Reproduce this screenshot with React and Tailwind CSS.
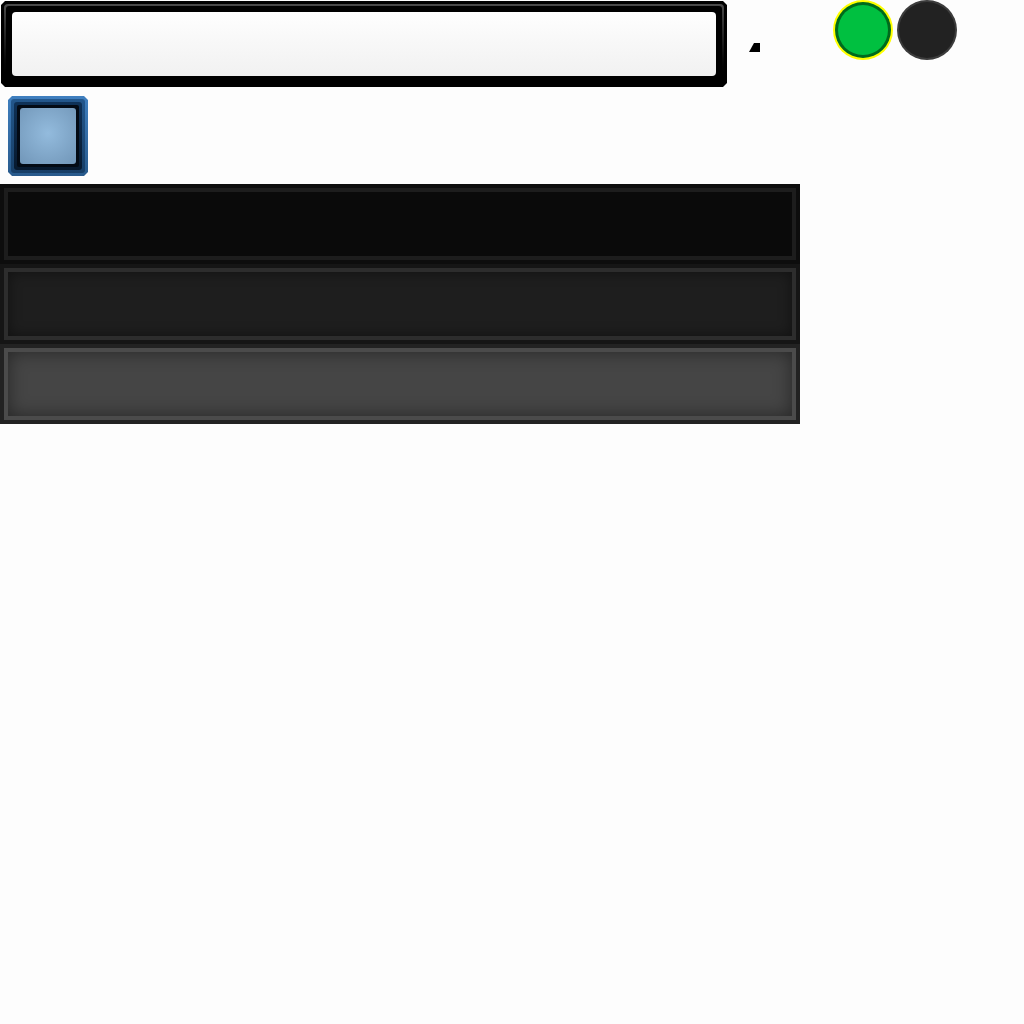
export default function App() {
  return (
    <div className="w-[1024px] h-[1024px] bg-[#fdfdfd] flex flex-col" style={{ fontFamily: '"Liberation Sans", sans-serif' }}>
      {/* top row */}
      <div className="flex items-start h-[88px]">
        <div className="mt-[1px] ml-[1px] w-[726px] h-[86px] bg-black p-[3px] [clip-path:polygon(4px_0,722px_0,726px_4px,726px_82px,722px_86px,4px_86px,0_82px,0_4px)]">
          <div className="w-full h-full p-[2px] bg-gradient-to-b from-[#4a4a4a] via-[#1a1a1a] to-black rounded-[4px]">
            <div className="w-full h-full bg-black p-[6px] rounded-[3px]">
              <div className="w-full h-full rounded-[4px] bg-gradient-to-b from-[#fefefe] to-[#f1f1f1]" />
            </div>
          </div>
        </div>
        <svg className="ml-[22px] mt-[43px]" width="11" height="9" viewBox="0 0 11 9">
          <polygon points="5,0 11,0 11,9 0,9" fill="#000" />
        </svg>
        <div className="ml-[73px] w-[60px] h-[60px] rounded-full bg-[#ffff00] p-[2px]">
          <div className="w-full h-full rounded-full bg-[#006a1c] p-[3px]">
            <div className="w-full h-full rounded-full bg-[#00c040]" />
          </div>
        </div>
        <div className="ml-[4px] w-[60px] h-[60px] rounded-full bg-[#3c3c3c] p-[2px]">
          <div className="w-full h-full rounded-full bg-[#222222]" />
        </div>
      </div>

      {/* blue button */}
      <div className="mt-[8px] ml-[8px] w-[80px] h-[80px] p-[3px] bg-gradient-to-b from-[#3f7fbf] to-[#285a8c] [clip-path:polygon(4px_0,76px_0,80px_4px,80px_76px,76px_80px,4px_80px,0_76px,0_4px)]">
        <div className="w-full h-full rounded-[3px] bg-gradient-to-b from-[#23578c] to-[#173e66] p-[3px]">
          <div className="w-full h-full rounded-[3px] bg-gradient-to-b from-[#0f3258] to-[#07192e] p-[3px]">
            <div className="w-full h-full rounded-[2px] bg-[#030a14] p-[3px]">
              <div className="w-full h-full rounded-[3px] bg-[radial-gradient(circle_at_50%_45%,#93bbdd,#7196b8)]" />
            </div>
          </div>
        </div>
      </div>

      {/* bars */}
      <div className="mt-[8px] w-[800px] flex flex-col">
        <div className="h-[80px] bg-[#0d0d0d] p-[4px]">
          <div className="w-full h-full border-[4px] border-[#1d1d1d] bg-[#0a0a0a]" />
        </div>
        <div className="h-[80px] bg-[#151515] p-[4px]">
          <div className="w-full h-full border-[4px] border-[#2d2d2d] bg-[#1e1e1e] shadow-[inset_0_0_14px_rgba(0,0,0,0.45)]" />
        </div>
        <div className="h-[80px] bg-[#222222] p-[4px]">
          <div className="w-full h-full border-[4px] border-[#4b4b4b] bg-[#454545] shadow-[inset_0_0_18px_rgba(0,0,0,0.45)]" />
        </div>
      </div>
    </div>
  );
}
